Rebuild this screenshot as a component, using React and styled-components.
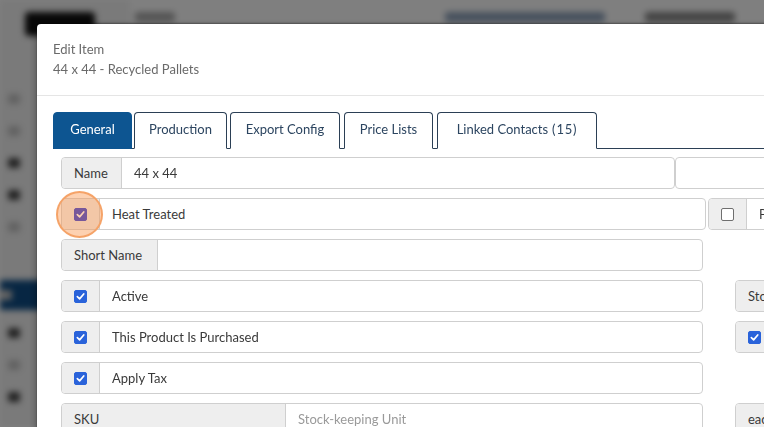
import React from 'react'
import styled, { createGlobalStyle } from 'styled-components'

const GlobalStyle = createGlobalStyle`
  html, body { margin: 0; padding: 0; overflow: hidden; }
  body { font-family: Lato, "Open Sans", "Liberation Sans", sans-serif; background: #fff; }
  * { box-sizing: border-box; }
`

// page behind the modal (blurred + dimmed)
const Page = styled.div`
  width: 764px;
  height: 427px;
  display: flex;
  filter: blur(3px);
  background: #fff;
`

const Sidebar = styled.div`
  width: 130px;
  padding-top: 90px;
  display: flex;
  flex-direction: column;
  gap: 14px;
  background: #f4f4f4;
`

const SideItem = styled.div`
  height: ${p => (p.active ? '30px' : '18px')};
  margin: ${p => (p.active ? '30px 0 0' : '0 0 0 8px')};
  background: ${p => (p.active ? '#0f4d86' : 'transparent')};
  display: flex;
  align-items: center;
  gap: 8px;
  &::before {
    content: '';
    width: 12px;
    height: 10px;
    border-radius: 2px;
    background: ${p => (p.dot ? '#444' : '#c4c4c4')};
  }
`

const Main = styled.div`
  flex: 1;
  display: flex;
  flex-direction: column;
`

const TopBar = styled.div`
  height: 44px;
  display: flex;
  align-items: flex-start;
  gap: 40px;
  padding: 12px 0 0 25px;
  margin-left: -130px;
`

const Logo = styled.div`
  width: 70px;
  height: 24px;
  border-radius: 4px;
  background: #111;
`

const TopLink = styled.div`
  width: ${p => p.w}px;
  height: 10px;
  margin-left: ${p => p.ml || 0}px;
  background: ${p => p.color || '#999'};
  border-radius: 3px;
`

const Overlay = styled.div`
  position: fixed;
  inset: 0;
  background: rgba(0, 0, 0, 0.5);
`

const Modal = styled.div`
  position: fixed;
  left: 37px;
  top: 24px;
  width: 800px;
  height: 460px;
  background: #fff;
  border-radius: 4px 0 0 0;
  box-shadow: 0 -1px 2px rgba(0, 0, 0, 0.35), 0 3px 9px rgba(0, 0, 0, 0.4);
`

const Header = styled.div`
  padding: 15px 16px 16px;
  border-bottom: 1px solid #e5e5e5;
  color: #6a6a6a;
  font-size: 13px;
  line-height: 20px;
`

const Body = styled.div`
  padding: 16px 16px 0;
`

const Tabs = styled.div`
  display: flex;
  height: 37px;
  border-bottom: 1px solid #2b3f55;
`

const Tab = styled.div`
  flex: none;
  width: ${p => p.w}px;
  height: 37px;
  padding-bottom: 3px;
  display: flex;
  align-items: center;
  justify-content: center;
  font-size: 13px;
  color: ${p => (p.active ? '#fff' : '#2c4560')};
  background: ${p => (p.active ? '#0d5591' : '#fff')};
  border: 1px solid ${p => (p.active ? '#0d5591' : '#2b3f55')};
  border-bottom-color: ${p => (p.active ? '#0d5591' : '#fff')};
  border-radius: 4px 4px 0 0;
  margin-right: ${p => p.mr || 0}px;
  white-space: nowrap;
`

const Count = styled.span`
  margin-left: 4px;
  letter-spacing: 0.8px;
`

const Pane = styled.div`
  padding: 8px 0 0 8px;
  display: flex;
  flex-direction: column;
  gap: 9px;
`

const Row = styled.div`
  display: flex;
  gap: ${p => p.gap || 0}px;
  height: 32px;
`

const Group = styled.div`
  width: ${p => p.w}px;
  flex: none;
  display: flex;
  border: 1px solid #cfcfcf;
  border-radius: 4px;
  overflow: ${p => (p.visible ? 'visible' : 'hidden')};
  background: #fff;
`

const Addon = styled.div`
  flex: none;
  width: ${p => (p.w ? p.w + 'px' : 'auto')};
  position: relative;
  display: flex;
  align-items: center;
  justify-content: ${p => (p.center ? 'center' : 'flex-start')};
  padding: ${p => (p.center ? '0' : '0 12px')};
  background: #eee;
  border-right: 1px solid #cfcfcf;
  border-radius: 3px 0 0 3px;
  font-size: 13px;
  color: #3a3a3a;
  white-space: nowrap;
`

const Field = styled.div`
  flex: 1;
  display: flex;
  align-items: center;
  padding: 0 12px;
  font-size: 13px;
  color: ${p => (p.placeholder ? '#9a9a9a' : '#3a3a3a')};
  white-space: nowrap;
`

const Box = styled.span`
  width: 13px;
  height: 13px;
  border-radius: 2px;
  display: inline-flex;
  align-items: center;
  justify-content: center;
  background: ${p => (p.checked ? p.tone || '#2a63da' : '#fff')};
  border: 1px solid ${p => (p.checked ? p.tone || '#2a63da' : '#6f6f6f')};
`

// orange click marker drawn over the focused checkbox
const Highlight = styled.span`
  position: absolute;
  left: -6px;
  top: -8px;
  width: 47px;
  height: 47px;
  border-radius: 50%;
  background: rgba(250, 145, 70, 0.42);
  border: 2px solid rgba(244, 160, 100, 0.95);
  pointer-events: none;
`

const Check = ({ checked, tone }) => (
  <Box checked={checked} tone={tone}>
    {checked && (
      <svg width="9" height="9" viewBox="0 0 10 10">
        <path d="M1.5 5.2 L4 7.6 L8.6 2.2" fill="none" stroke="#fff" strokeWidth="1.9" strokeLinecap="round" strokeLinejoin="round" />
      </svg>
    )}
  </Box>
)

const CheckRow = ({ label, highlight, w = 642 }) => (
  <Group w={w} visible={highlight}>
    <Addon w={38} center>
      <Check checked tone={highlight ? '#1a2fd8' : undefined} />
      {highlight && <Highlight />}
    </Addon>
    <Field>{label}</Field>
  </Group>
)

const tabs = [
  { label: 'General', w: 79, mr: 2 },
  { label: 'Production', w: 93, mr: 3 },
  { label: 'Export Config', w: 110, mr: 4 },
  { label: 'Price Lists', w: 89, mr: 4 },
  { label: 'Linked Contacts', w: 160, count: 15 },
]

export default function App() {
  return (
    <>
      <GlobalStyle />
      <Page>
        <Sidebar>
          <SideItem />
          <SideItem />
          <SideItem dot />
          <SideItem dot />
          <SideItem />
          <SideItem active />
          <SideItem dot />
          <SideItem />
          <SideItem dot />
        </Sidebar>
        <Main>
          <TopBar>
            <Logo />
            <TopLink w={40} color="#aaa" />
            <TopLink w={160} ml={230} color="#8ea2bb" />
            <TopLink w={90} color="#888" />
          </TopBar>
        </Main>
      </Page>
      <Overlay />
      <Modal>
        <Header>
          <div>Edit Item</div>
          <div>44 x 44 - Recycled Pallets</div>
        </Header>
        <Body>
          <Tabs>
            {tabs.map((t, i) => (
              <Tab key={t.label} active={i === 0} w={t.w} mr={t.mr}>
                {t.label}
                {t.count != null && <Count>({t.count})</Count>}
              </Tab>
            ))}
          </Tabs>
          <Pane>
            <Row>
              <Group w={614}>
                <Addon w={60}>Name</Addon>
                <Field>44 x 44</Field>
              </Group>
              <Group w={120} />
            </Row>
            <Row gap={2}>
              <CheckRow label="Heat Treated" highlight w={645} />
              <Group w={120}>
                <Addon w={38} center>
                  <Check />
                </Addon>
                <Field>Pallet</Field>
              </Group>
            </Row>
            <Row>
              <Group w={642}>
                <Addon w={96}>Short Name</Addon>
                <Field />
              </Group>
            </Row>
            <Row gap={32}>
              <CheckRow label="Active" />
              <Group w={120}>
                <Addon>Stock</Addon>
              </Group>
            </Row>
            <Row gap={32}>
              <CheckRow label="This Product Is Purchased" />
              <Group w={120}>
                <Addon w={38} center>
                  <Check checked />
                </Addon>
              </Group>
            </Row>
            <Row>
              <CheckRow label="Apply Tax" />
            </Row>
            <Row gap={32}>
              <Group w={642}>
                <Addon w={224}>SKU</Addon>
                <Field placeholder>Stock-keeping Unit</Field>
              </Group>
              <Group w={120}>
                <Addon>each</Addon>
              </Group>
            </Row>
          </Pane>
        </Body>
      </Modal>
    </>
  )
}
